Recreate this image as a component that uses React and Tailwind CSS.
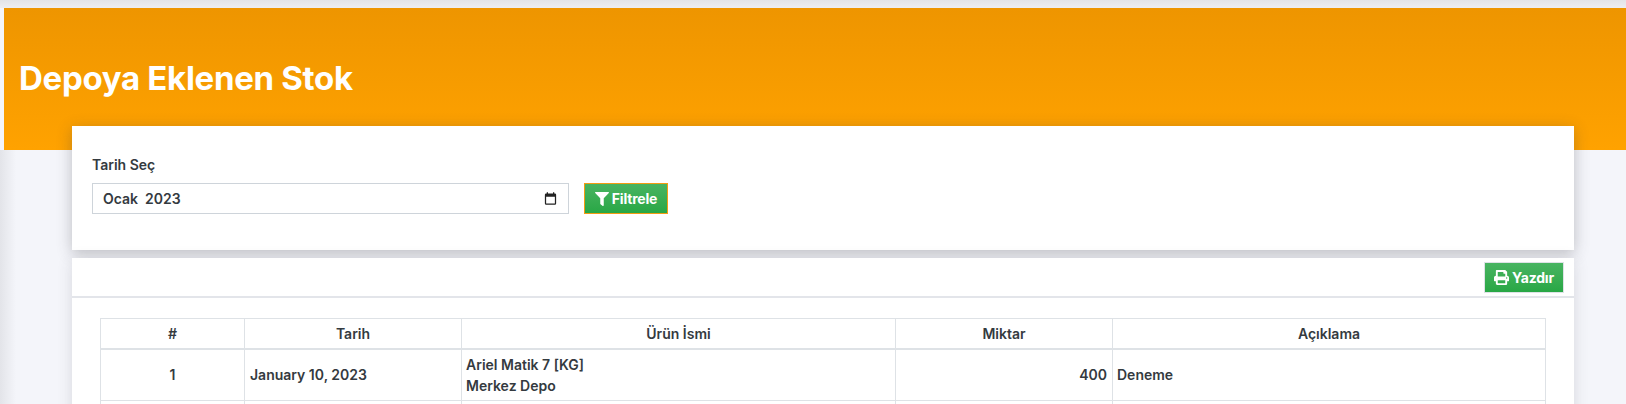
import { FaFilter, FaPrint } from 'react-icons/fa';

const HEAD = ['#', 'Tarih', 'Ürün İsmi', 'Miktar', 'Açıklama'];

const App = () => {
  return (
    <div className="relative h-[404px] overflow-hidden bg-[#f4f5fa] font-['Inter',sans-serif] text-[#343a40] font-semibold">
      <div className="h-2 bg-gradient-to-b from-[#e3e4e7] to-[#eeeef1]" />

      <div className="relative ml-1 h-[142px] bg-gradient-to-b from-[#ee9500] to-[#ffa200] px-[15px] pt-[50px]">
        <h1 className="text-[33px] leading-[40px] font-bold tracking-[-0.3px] text-white">Depoya Eklenen Stok</h1>
      </div>

      {/* soft shadow from the collapsed sidebar */}
      <div className="absolute top-[150px] bottom-0 left-0 w-4 bg-gradient-to-r from-[#e3e4e9] to-[#f4f5fa]" />

      <div className="relative mr-[52px] ml-[72px] -mt-6">
        <div className="relative z-10 h-[124px] bg-white px-5 pt-[30px] shadow-[0_3px_14px_rgba(60,60,65,0.3)]">
          <label className="block text-[14px] leading-[17px]">Tarih Seç</label>
          <div className="mt-[10px] flex items-start gap-[15px]">
            <div className="flex h-[31px] w-[477px] items-center justify-between border border-[#ced4da] pr-[10px] pl-[10px] text-[14px]">
              <span className="whitespace-pre">Ocak  2023</span>
              <svg viewBox="0 0 24 24" className="h-[15px] w-[15px] fill-[#222]">
                <path d="M19 4h-1V2h-2v2H8V2H6v2H5a2 2 0 0 0-2 2v14a2 2 0 0 0 2 2h14a2 2 0 0 0 2-2V6a2 2 0 0 0-2-2zm0 16H5V9h14z" />
              </svg>
            </div>
            <button className="flex h-[31px] w-[84px] items-center justify-center gap-[3px] border border-[#f39c12] bg-gradient-to-b from-[#48b461] to-[#28a745] text-[14px] font-bold tracking-[-0.2px] text-white">
              <FaFilter size={14} />
              Filtrele
            </button>
          </div>
        </div>

        <div className="relative z-20 mt-2 bg-white shadow-[0_2px_14px_rgba(60,60,65,0.15)]">
          <div className="flex h-10 items-center justify-end border-b-2 border-[#e3e5ea] pr-[10px]">
            <button className="flex h-[31px] w-[80px] items-center justify-center gap-[3px] border border-[#dee2e6] bg-gradient-to-b from-[#48b461] to-[#28a745] text-[14px] font-bold tracking-[-0.2px] text-white">
              <FaPrint size={15} />
              Yazdır
            </button>
          </div>
          <div className="px-7 pt-5">
            <table className="w-full table-fixed border-collapse text-[14px]">
              <colgroup>
                <col className="w-[144px]" />
                <col className="w-[217px]" />
                <col className="w-[434px]" />
                <col className="w-[217px]" />
                <col />
              </colgroup>
              <thead>
                <tr className="h-[30px]">
                  {HEAD.map((h) => (
                    <th key={h} className="border border-b-2 border-[#dee2e6] font-semibold">{h}</th>
                  ))}
                </tr>
              </thead>
              <tbody>
                <tr className="h-[52px]">
                  <td className="border border-[#dee2e6] text-center">1</td>
                  <td className="border border-[#dee2e6] px-[5px]">January 10, 2023</td>
                  <td className="border border-[#dee2e6] px-1 leading-[21px]">Ariel Matik 7 [KG]<br />Merkez Depo</td>
                  <td className="border border-[#dee2e6] px-[5px] text-right">400</td>
                  <td className="border border-[#dee2e6] px-1">Deneme</td>
                </tr>
                <tr className="h-[50px]">
                  <td className="border border-[#dee2e6]" />
                  <td className="border border-[#dee2e6]" />
                  <td className="border border-[#dee2e6]" />
                  <td className="border border-[#dee2e6]" />
                  <td className="border border-[#dee2e6]" />
                </tr>
              </tbody>
            </table>
          </div>
        </div>
      </div>
    </div>
  );
};

export default App;
